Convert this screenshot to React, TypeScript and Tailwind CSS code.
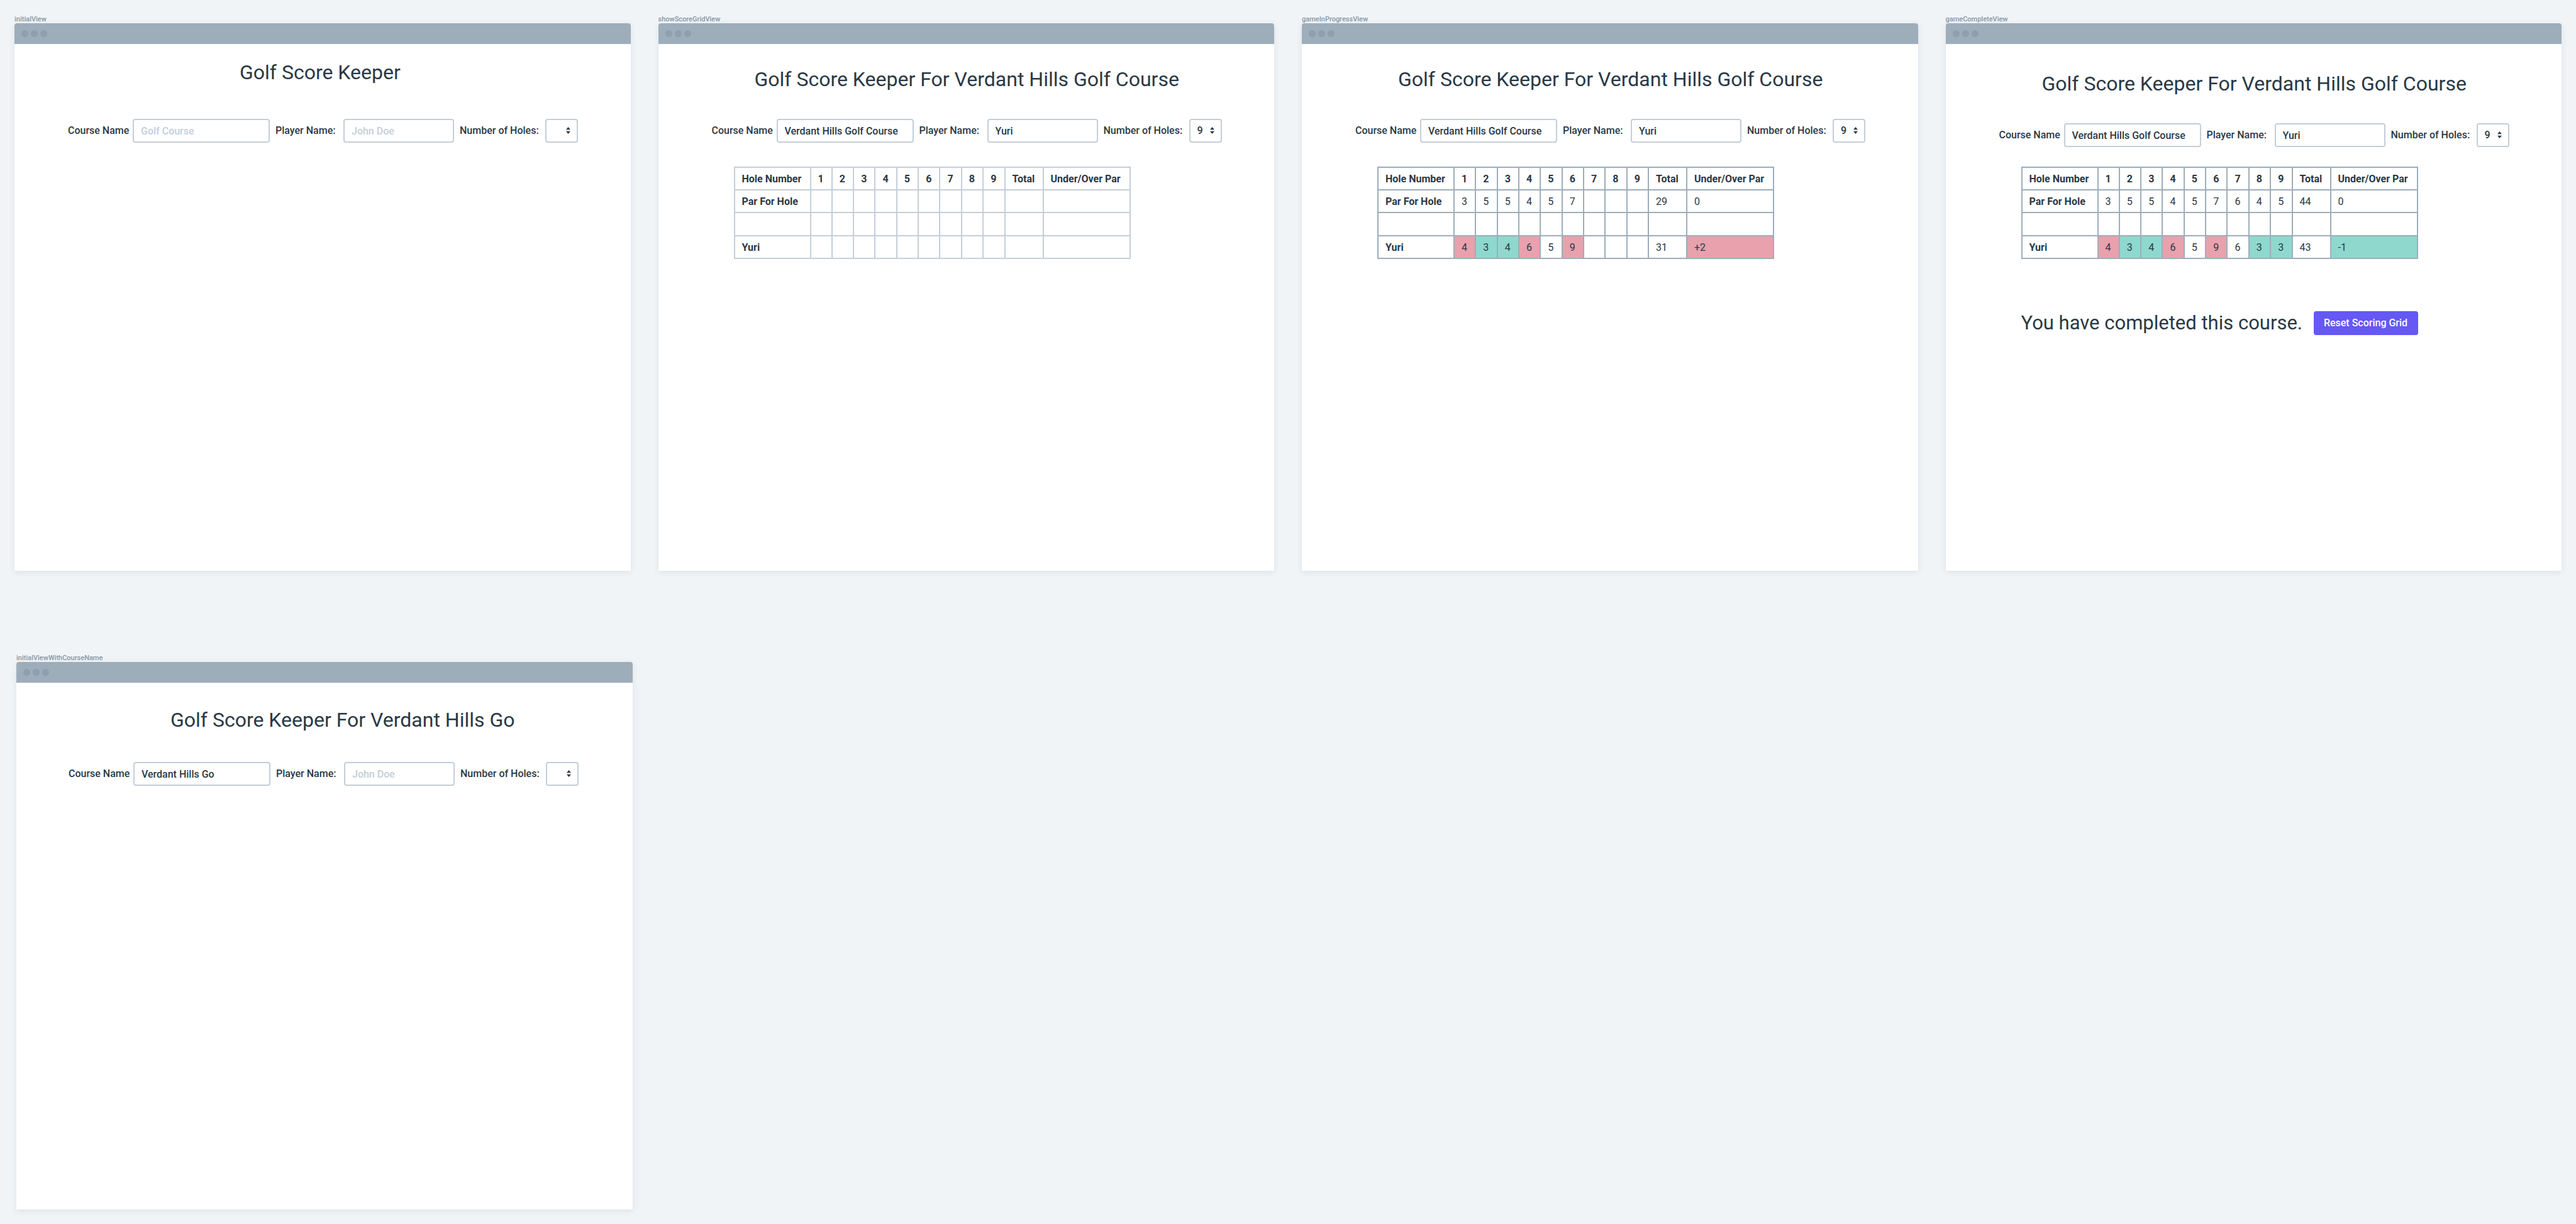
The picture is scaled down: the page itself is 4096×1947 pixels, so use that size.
import React, { useId } from "react";

type Score = { value: string; tone?: "over" | "under" };

type View = {
  name: string;
  frameClass?: string;
  titleClass: string;
  formClass: string;
  title: string;
  course: string;
  player: string;
  holes: string;
  table?: { borderClass: string; par: Score[]; scores: Score[] };
  tableClass?: string;
  complete?: boolean;
};

const HOLES = ["1", "2", "3", "4", "5", "6", "7", "8", "9"];

const blank = (count: number): Score[] => Array.from({ length: count }, () => ({ value: "" }));
const plain = (...values: string[]): Score[] => values.map((value) => ({ value }));
const over = (value: string): Score => ({ value, tone: "over" });
const under = (value: string): Score => ({ value, tone: "under" });

const LONG_TITLE = "Golf Score Keeper For Verdant Hills Golf Course";

const VIEWS: View[] = [
  {
    name: "initialView",
    titleClass: "pt-[25px] pl-[358px]",
    formClass: "mt-[54px] pl-[85px]",
    title: "Golf Score Keeper",
    course: "",
    player: "",
    holes: "",
  },
  {
    name: "showScoreGridView",
    titleClass: "pt-[36px] pl-[153px]",
    formClass: "mt-[43px] pl-[85px]",
    title: LONG_TITLE,
    course: "Verdant Hills Golf Course",
    player: "Yuri",
    holes: "9",
    table: { borderClass: "border-[#c3cfd9]", par: blank(11), scores: blank(11) },
    tableClass: "mt-[38px]",
  },
  {
    name: "gameInProgressView",
    titleClass: "pt-[36px] pl-[153px]",
    formClass: "mt-[43px] pl-[85px]",
    title: LONG_TITLE,
    course: "Verdant Hills Golf Course",
    player: "Yuri",
    holes: "9",
    table: {
      borderClass: "border-[#9eadba]",
      par: plain("3", "5", "5", "4", "5", "7", "", "", "", "29", "0"),
      scores: [over("4"), under("3"), under("4"), over("6"), ...plain("5"), over("9"), ...blank(3), ...plain("31"), over("+2")],
    },
    tableClass: "mt-[38px]",
  },
  {
    name: "gameCompleteView",
    titleClass: "pt-[43px] pl-[153px]",
    formClass: "mt-[43px] pl-[85px]",
    title: LONG_TITLE,
    course: "Verdant Hills Golf Course",
    player: "Yuri",
    holes: "9",
    table: {
      borderClass: "border-[#9eadba]",
      par: plain("3", "5", "5", "4", "5", "7", "6", "4", "5", "44", "0"),
      scores: [
        over("4"), under("3"), under("4"), over("6"), ...plain("5"), over("9"), ...plain("6"),
        under("3"), under("3"), ...plain("43"), under("-1"),
      ],
    },
    tableClass: "mt-[31px]",
    complete: true,
  },
  {
    name: "initialViewWithCourseName",
    frameClass: "ml-[3px] -mr-[3px]",
    titleClass: "pt-[39px] pl-[245px]",
    formClass: "mt-[47px] pl-[83px]",
    title: "Golf Score Keeper For Verdant Hills Go",
    course: "Verdant Hills Go",
    player: "",
    holes: "",
  },
];

const fieldClass =
  "h-[38px] rounded-[4px] border-2 border-[#c4ced9] bg-white pl-[11px] text-[16px] font-medium text-[#293845] outline-none placeholder:text-[#c4ced9] placeholder:opacity-100";

function ScoreForm({ view }: { view: View }) {
  const id = useId();
  return (
    <form className={`flex items-center text-[16px] font-medium ${view.formClass}`}>
      <label htmlFor={`${id}-course`} className="w-[103px] shrink-0 whitespace-nowrap">
        Course Name
      </label>
      <input id={`${id}-course`} className={`${fieldClass} w-[218px] shrink-0`} placeholder="Golf Course" defaultValue={view.course} />
      <label htmlFor={`${id}-player`} className="ml-[9px] w-[108px] shrink-0 whitespace-nowrap">
        Player Name:
      </label>
      <input id={`${id}-player`} className={`${fieldClass} w-[176px] shrink-0`} placeholder="John Doe" defaultValue={view.player} />
      <label htmlFor={`${id}-holes`} className="ml-[9px] w-[136px] shrink-0 whitespace-nowrap">
        Number of Holes:
      </label>
      <div className="relative shrink-0">
        <select id={`${id}-holes`} className={`${fieldClass} w-[52px] appearance-none`} defaultValue={view.holes}>
          <option value=""></option>
          <option value="9">9</option>
          <option value="18">18</option>
        </select>
        <svg className="pointer-events-none absolute top-[13px] right-[12px]" width="7" height="11" viewBox="0 0 7 11" fill="#293845" aria-hidden="true">
          <path d="M3.5 0 L7 4.2 H0 Z" />
          <path d="M3.5 11 L7 6.8 H0 Z" />
        </svg>
      </div>
    </form>
  );
}

function toneClass(tone?: "over" | "under") {
  if (tone === "over") return "bg-[#e8a1ad]";
  if (tone === "under") return "bg-[#8fd8ce]";
  return "";
}

function ScoreRow({ label, cells, cellBorder }: { label: string; cells: Score[]; cellBorder: string }) {
  return (
    <tr className="h-[36px]">
      <th scope="row" className={`${cellBorder} text-left font-bold`}>
        {label}
      </th>
      {cells.map((cell, index) => (
        <td key={index} className={`${cellBorder} ${toneClass(cell.tone)} font-normal`}>
          {cell.value}
        </td>
      ))}
    </tr>
  );
}

function ScoreTable({ view }: { view: View }) {
  if (!view.table) return null;
  const { borderClass, par, scores } = view.table;
  const cellBorder = `border-2 ${borderClass} px-[11px] pt-[2px] pb-0`;
  return (
    <table className={`ml-[120px] h-[147px] w-[631px] table-fixed border-collapse text-[16px] leading-[24px] ${view.tableClass}`}>
      <colgroup>
        <col className="w-[121px]" />
        {HOLES.map((hole) => (
          <col key={hole} />
        ))}
        <col className="w-[61px]" />
        <col className="w-[138px]" />
      </colgroup>
      <thead>
        <tr className="h-[36px]">
          {["Hole Number", ...HOLES, "Total", "Under/Over Par"].map((heading) => (
            <th key={heading} scope="col" className={`${cellBorder} text-left font-bold whitespace-nowrap`}>
              {heading}
            </th>
          ))}
        </tr>
      </thead>
      <tbody>
        <ScoreRow label="Par For Hole" cells={par} cellBorder={cellBorder} />
        <ScoreRow label="" cells={blank(11)} cellBorder={cellBorder} />
        <ScoreRow label="Yuri" cells={scores} cellBorder={cellBorder} />
      </tbody>
    </table>
  );
}

function Frame({ view }: { view: View }) {
  return (
    <section className={`min-w-0 ${view.frameClass ?? ""}`}>
      <h2 className="h-[13px] text-[11px] leading-[13px] font-medium text-[#8595a4]">{view.name}</h2>
      <div className="min-h-[871px] rounded-t-[4px] bg-white shadow-[0_2px_10px_rgba(41,56,69,0.1)]">
        <div className="flex h-[33px] items-center gap-[4px] rounded-t-[4px] bg-[#9eadba] px-[11px]">
          <span className="size-[11px] rounded-full bg-[#8f9fae]" />
          <span className="size-[11px] rounded-full bg-[#8f9fae]" />
          <span className="size-[11px] rounded-full bg-[#8f9fae]" />
        </div>
        <h1 className={`text-[32px] leading-[40px] font-normal whitespace-nowrap ${view.titleClass}`}>{view.title}</h1>
        <ScoreForm view={view} />
        <ScoreTable view={view} />
        {view.complete && (
          <div className="mt-[83px] ml-[120px] flex w-[631px] items-center justify-between">
            <p className="text-[31px] leading-[38px] whitespace-nowrap">You have completed this course.</p>
            <button type="button" className="h-[38px] w-[166px] rounded-[4px] bg-[#6558f5] text-[16px] font-medium text-white">
              Reset Scoring Grid
            </button>
          </div>
        )}
      </div>
    </section>
  );
}

export default function App() {
  return (
    <main className="grid min-h-screen grid-cols-4 content-start gap-x-[44px] gap-y-[132px] bg-[#f0f4f7] px-[23px] pt-[24px] font-['Roboto',sans-serif] text-[#293845]">
      {VIEWS.map((view) => (
        <Frame key={view.name} view={view} />
      ))}
    </main>
  );
}
